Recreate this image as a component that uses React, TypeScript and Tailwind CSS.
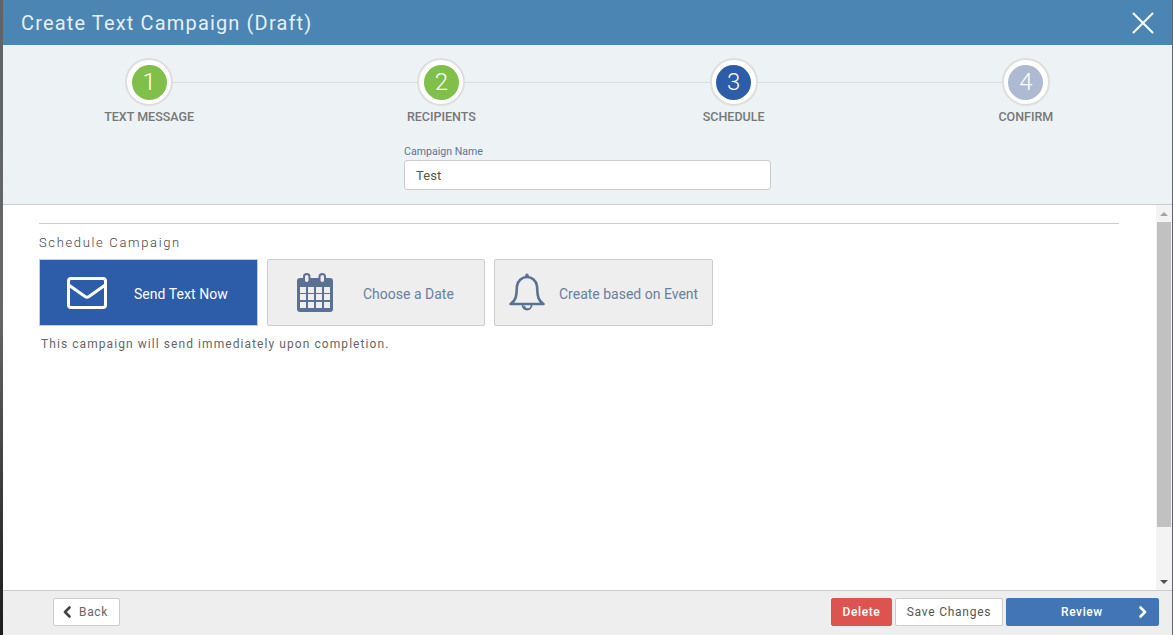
import React from "react";

const steps = [
  { n: "1", label: "TEXT MESSAGE", color: "bg-[#7fbf4a]" },
  { n: "2", label: "RECIPIENTS", color: "bg-[#7fbf4a]" },
  { n: "3", label: "SCHEDULE", color: "bg-[#2d5ca9]" },
  { n: "4", label: "CONFIRM", color: "bg-[#aeb9d2]" },
];

function Envelope() {
  return (
    <svg width="40" height="32" viewBox="0 0 40 32" fill="none" stroke="#fff" strokeWidth="3" strokeLinejoin="round" strokeLinecap="round">
      <rect x="1.5" y="1.5" width="37" height="29" rx="2.5" />
      <path d="M2.5 8.5 L18 19.5 Q20 20.8 22 19.5 L37.5 8.5" />
    </svg>
  );
}

function CalendarIcon() {
  const xs = [3, 11, 19, 27];
  const ys = [14, 21, 29];
  return (
    <svg width="36" height="40" viewBox="0 0 36 40">
      <path fill="#5a7193" d="M3 5h30a3 3 0 0 1 3 3v28a3 3 0 0 1-3 3H3a3 3 0 0 1-3-3V8a3 3 0 0 1 3-3z" />
      <rect x="7" y="1" width="5.5" height="9" rx="2.75" fill="#eeeeee" stroke="#5a7193" strokeWidth="2" />
      <rect x="22.5" y="1" width="5.5" height="9" rx="2.75" fill="#eeeeee" stroke="#5a7193" strokeWidth="2" />
      <g fill="#eeeeee">
        {ys.map((y) => xs.map((x) => <rect key={`${x}-${y}`} x={x} y={y} width="6" height="6" />))}
      </g>
    </svg>
  );
}

function BellIcon() {
  return (
    <svg width="36" height="40" viewBox="0 0 36 40" fill="none" stroke="#5a7193" strokeLinejoin="round" strokeLinecap="round">
      <circle cx="18" cy="2.4" r="1.8" fill="#5a7193" stroke="none" />
      <path strokeWidth="2.6" d="M6.5 25 C8 21 7.5 17 8 13 C8.8 7.5 13 4 18 4 C23 4 27.2 7.5 28 13 C28.5 17 28 21 29.5 25 C30.5 28 32 29.5 34.5 31 L1.5 31 C4 29.5 5.5 28 6.5 25 Z" />
      <path strokeWidth="1.8" d="M13.5 32 C13.5 38 22.5 38 22.5 32" />
      <path strokeWidth="1.4" d="M15.5 33.5 C16 35.5 18 36.5 20 36" />
    </svg>
  );
}

function Chevron({ left, color }: { left?: boolean; color: string }) {
  return (
    <svg width="10" height="12" viewBox="0 0 10 12" fill="none" stroke={color} strokeWidth="2.6" strokeLinecap="round" strokeLinejoin="round">
      <path d={left ? "M7.5 1.5 L3 6 L7.5 10.5" : "M2.5 1.5 L7 6 L2.5 10.5"} />
    </svg>
  );
}

export default function App() {
  return (
    <div className="flex h-[635px] w-full overflow-hidden bg-[#444] font-['Roboto',sans-serif]">
      <div className="w-[3px] shrink-0 bg-gradient-to-b from-[#5f6468] via-[#666666] to-[#1c1c1c]" />
      <div className="flex min-w-0 flex-1 flex-col">
        <header className="flex h-[45px] shrink-0 items-center justify-between bg-[#4a85b3] pl-[18px] pr-[18px]">
          <h1 className="text-[20px] font-normal leading-none tracking-[1.15px] text-[#e6eff6]">Create Text Campaign (Draft)</h1>
          <svg width="22" height="22" viewBox="0 0 22 22" stroke="#fff" strokeWidth="2" strokeLinecap="round">
            <path d="M1.5 1.5 L20.5 20.5 M20.5 1.5 L1.5 20.5" />
          </svg>
        </header>

        <section className="h-[160px] shrink-0 border-b border-[#cccccc] bg-[#edf2f5]">
          <div className="grid grid-cols-4 pt-[13px]">
            {steps.map((s, i) => (
              <div key={s.n} className="relative flex flex-col items-center">
                {i > 0 && <div className="absolute left-0 top-[24px] h-px w-1/2 bg-[#dddddd]" />}
                {i < 3 && <div className="absolute right-0 top-[24px] h-px w-1/2 bg-[#dddddd]" />}
                <div className="relative flex h-[48px] w-[48px] items-center justify-center rounded-full border-2 border-[#dedede] bg-white">
                  <div className={`flex h-[35px] w-[35px] items-center justify-center rounded-full text-[24px] font-light leading-none text-white ${s.color}`}>{s.n}</div>
                </div>
                <div className="mt-[4px] text-[12.5px] font-medium leading-[14px] text-[#777777]">{s.label}</div>
              </div>
            ))}
          </div>
          <div className="ml-[401px] mt-[22px] w-[367px]">
            <label className="block text-[10.6px] leading-[12px] text-[#5f7596]">Campaign Name</label>
            <div className="mt-[2px] flex h-[30px] items-center rounded-[3px] border border-[#cccccc] bg-white pl-[11px] pt-[2px] text-[13px] tracking-[0.1px] text-[#555555]">Test</div>
          </div>
        </section>

        <div className="flex min-h-0 flex-1 bg-white">
          <main className="min-w-0 flex-1 pl-[36px] pr-[37px] pt-[18px]">
            <div className="h-px bg-[#cccccc]" />
            <h2 className="mt-[12px] text-[13px] font-light leading-[14px] tracking-[1.65px] text-[#444444]">Schedule Campaign</h2>
            <div className="mt-[9px] flex gap-[9px]">
              <button className="flex h-[67px] w-[219px] items-center border border-[#cccccc] bg-[#2d5ca9] pl-[27px] text-[14px] tracking-[0.05px] text-white">
                <Envelope />
                <span className="ml-[27px] mt-[4px]">Send Text Now</span>
              </button>
              <button className="flex h-[67px] w-[218px] items-center rounded-[2px] border border-[#cccccc] bg-[#eeeeee] pl-[29px] text-[14px] text-[#6a7f9e]">
                <CalendarIcon />
                <span className="ml-[30px] mt-[4px]">Choose a Date</span>
              </button>
              <button className="flex h-[67px] w-[219px] items-center rounded-[2px] border border-[#cccccc] bg-[#eeeeee] pl-[14px] text-[14px] text-[#6a7f9e]">
                <BellIcon />
                <span className="ml-[14px] mt-[4px]">Create based on Event</span>
              </button>
            </div>
            <p className="ml-[2px] mt-[11px] text-[12px] leading-[14px] tracking-[1.07px] text-[#666666]">This campaign will send immediately upon completion.</p>
          </main>
          <div className="flex w-[16px] shrink-0 flex-col items-center bg-[#f3f3f3]">
            <div className="flex h-[17px] items-center justify-center">
              <div className="h-0 w-0 border-x-[4px] border-b-[4px] border-x-transparent border-b-[#a3a3a3]" />
            </div>
            <div className="h-[305px] w-[14px] bg-[#c1c1c1]" />
            <div className="flex-1" />
            <div className="flex h-[17px] items-center justify-center">
              <div className="h-0 w-0 border-x-[4px] border-t-[4px] border-x-transparent border-t-[#505050]" />
            </div>
          </div>
        </div>

        <footer className="flex h-[45px] shrink-0 items-start justify-between border-t border-[#cccccc] bg-[#eeeeee] pl-[50px] pr-[13px] pt-[7px]">
          <button className="flex h-[28px] w-[67px] items-center justify-center gap-[7px] rounded-[2px] border border-[#cccccc] bg-white pr-[3px] text-[12px] tracking-[0.6px] text-[#666666]">
            <Chevron left color="#444444" />
            Back
          </button>
          <div className="flex gap-[3px]">
            <button className="h-[28px] w-[61px] rounded-[2px] border border-[#d9534f] bg-[#dd5350] text-[12px] font-medium tracking-[0.6px] text-white">Delete</button>
            <button className="h-[28px] w-[108px] rounded-[2px] border border-[#cccccc] bg-white text-[12px] tracking-[0.75px] text-[#555555]">Save Changes</button>
            <button className="flex h-[28px] w-[153px] items-center rounded-[2px] bg-[#4175b6] pl-[55px] pr-[11px] text-[12px] font-medium tracking-[0.6px] text-white">
              <span>Review</span>
              <span className="ml-auto"><Chevron color="#ffffff" /></span>
            </button>
          </div>
        </footer>
      </div>
      <div className="w-px shrink-0 bg-[#5a6670]" />
    </div>
  );
}
